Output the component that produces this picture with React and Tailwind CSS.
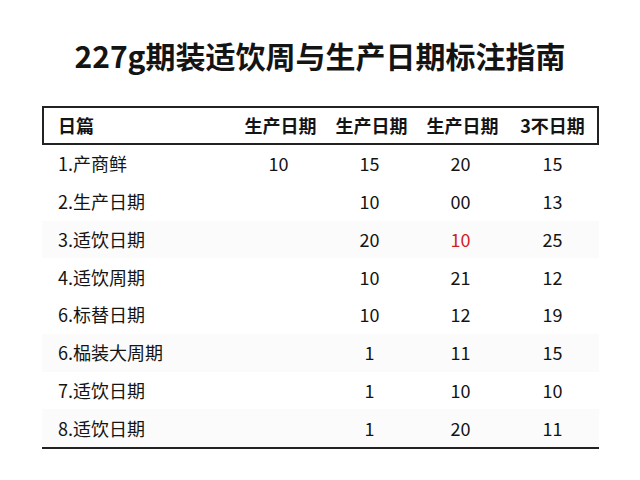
const rows = [
  { label: '1.产商鲜', cells: ['10', '15', '20', '15'] },
  { label: '2.生产日期', cells: ['', '10', '00', '13'] },
  { label: '3.适饮日期', cells: ['', '20', '10', '25'], red: 2 },
  { label: '4.适饮周期', cells: ['', '10', '21', '12'] },
  { label: '6.标替日期', cells: ['', '10', '12', '19'] },
  { label: '6.榀装大周期', cells: ['', '1', '11', '15'] },
  { label: '7.适饮日期', cells: ['', '1', '10', '10'] },
  { label: '8.适饮日期', cells: ['', '1', '20', '11'] },
]

const headers = ['生产日期', '生产日期', '生产日期', '3不日期']

const cols = 'grid grid-cols-[191px_91px_91px_91px_1fr]'

export default function App() {
  return (
    <div
      className="w-[640px] h-[480px] bg-white text-[#141414] pt-[35px]"
      style={{ fontFamily: '"Noto Sans CJK SC", "Noto Sans", sans-serif' }}
    >
      <h1 className="h-[40px] flex items-center justify-center text-[30px] font-bold">
        227g期装适饮周与生产日期标注指南
      </h1>

      <div className="w-[557px] ml-[42px] mt-[31px]">
        <div className={`${cols} h-[39px] items-center border-2 border-[#222] font-bold text-[18px]`}>
          <div className="pl-[14px]">日篇</div>
          {headers.map((h, i) => (
            <div key={i} className="text-center">{h}</div>
          ))}
        </div>

        <div className="border-b-2 border-[#222]">
          {rows.map((r, i) => (
            <div
              key={i}
              className={`${cols} h-[37.75px] items-center text-[18px] ${i === 2 || i === 5 || i === 7 ? 'bg-[#fbfbfb]' : ''}`}
            >
              <div className="pl-[16px]">{r.label}</div>
              {r.cells.map((c, j) => (
                <div key={j} className={`text-center ${r.red === j ? 'text-[#d11f1f]' : ''}`}>
                  {c}
                </div>
              ))}
            </div>
          ))}
        </div>
      </div>
    </div>
  )
}
